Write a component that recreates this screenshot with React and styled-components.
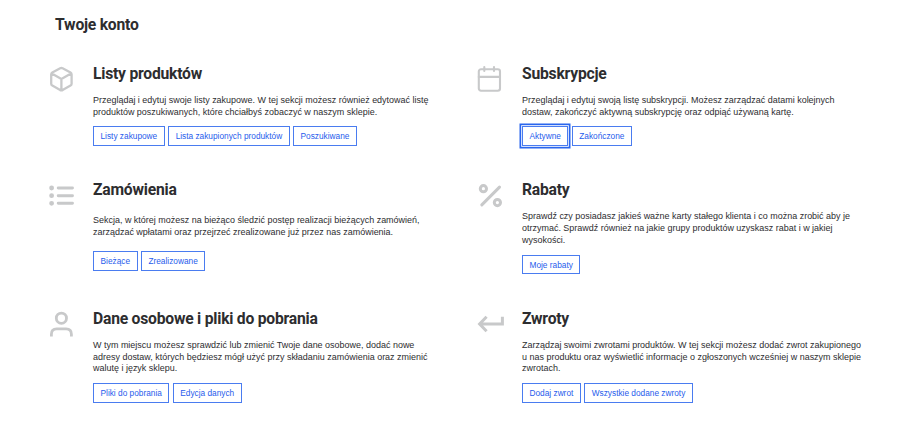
import React from 'react'
import styled, { createGlobalStyle } from 'styled-components'

const GlobalStyle = createGlobalStyle`
    * {
        box-sizing: border-box;
    }

    body {
        margin: 0;
        background: #fff;
        color: #2d2d2f;
        font-family: "Liberation Sans", Arial, sans-serif;
    }
`

const Page = styled.main`
    width: 908px;
    height: 424px;
    padding: 15px 0 0 48px;
    overflow: hidden;
`

const PageTitle = styled.h1`
    margin: 0 0 28.6px 7px;
    font-family: Roboto, sans-serif;
    font-size: 15.7px;
    font-weight: 700;
    letter-spacing: -0.24px;
    line-height: 20px;
`

const Sections = styled.div`
    display: grid;
    grid-template-columns: 429px 400px;
    grid-template-rows: 116.6px 128.5px 110px;
`

const Section = styled.section`
    display: flex;
    align-items: flex-start;
`

const Icon = styled.svg`
    flex: none;
    width: 28px;
    height: 28px;
    margin: 1.5px 17px 0 0;
    fill: none;
    stroke: #c8c9ca;
    stroke-width: ${props => props.$stroke || 2.3};
    stroke-linecap: round;
    stroke-linejoin: round;
`

const Content = styled.div`
    flex: 1;
    white-space: nowrap;
`

const Title = styled.h2`
    margin: 0;
    font-family: Roboto, sans-serif;
    font-size: 15.7px;
    font-weight: 700;
    letter-spacing: -0.23px;
    line-height: 20.4px;
`

const Description = styled.p`
    margin: ${props => (props.$spaced ? '14.8px 0 12.2px' : '10.9px 0 8.2px')};
    font-size: 8.97px;
    line-height: 11.7px;
`

const Buttons = styled.div`
    display: flex;
    gap: 3.4px;
`

const Button = styled.a`
    height: 19.6px;
    padding: 0 6.5px;
    border: 1px solid #4a7cf0;
    box-shadow: ${props => (props.$active ? '0 0 0 0.8px #fff, 0 0 0 2.5px #2a66ee' : 'none')};
    color: #1f5cec;
    font-size: 8.3px;
    line-height: 18px;
    text-decoration: none;
    cursor: pointer;
`

const BoxIcon = () => (
    <Icon viewBox="0 0 28 28">
        <path d="M12.2 3.3 4.3 7.5Q3.2 8.2 3.2 9.5v9.2q0 1.3 1.1 1.9l7.9 4.5q1.2.6 2.4 0l7.9-4.5q1.1-.6 1.1-1.9V9.5q0-1.3-1.1-2l-7.9-4.2q-1.2-.6-2.4 0zM3.8 8.4l9.6 5.5 9.6-5.5M13.4 13.9v11.3" />
    </Icon>
)

const CalendarIcon = () => (
    <Icon viewBox="0 0 28 28" $stroke={2.1}>
        <rect x="1.8" y="4.3" width="21.2" height="21.4" rx="2.2" />
        <path d="M1.8 11.9H23M7.3 2v4M17 2v4" />
    </Icon>
)

const ListIcon = () => (
    <Icon viewBox="0 0 28 28" $stroke={2.9}>
        <path d="M10.2 6h14.3M10.2 13.7h14.3M10.2 21.3h14.3" />
        <path d="M3.6 6h.01M3.6 13.7h.01M3.6 21.3h.01" strokeWidth="4.8" />
    </Icon>
)

const PercentIcon = () => (
    <Icon viewBox="0 0 28 28" $stroke={3}>
        <circle cx="6.4" cy="6.7" r="3.1" />
        <circle cx="20.4" cy="20.6" r="3.1" />
        <path d="M22.5 5.1 4.8 22.9" />
    </Icon>
)

const UserIcon = () => (
    <Icon viewBox="0 0 28 28" $stroke={2.8}>
        <circle cx="13.4" cy="8.2" r="5.1" />
        <path d="M3.4 26.5v-2.3q0-5.3 5.3-5.3h9.4q5.3 0 5.3 5.3v2.3" strokeLinecap="butt" />
    </Icon>
)

const ReturnIcon = () => (
    <Icon viewBox="0 0 28 28" $stroke={3}>
        <path d="M25.4 6.8V14H3M9.6 6.8 2.6 14l7 7.2" strokeLinecap="butt" strokeLinejoin="miter" />
    </Icon>
)

const sections = [
    {
        icon: BoxIcon,
        title: 'Listy produktów',
        lines: [
            'Przeglądaj i edytuj swoje listy zakupowe. W tej sekcji możesz również edytować listę',
            'produktów poszukiwanych, które chciałbyś zobaczyć w naszym sklepie.',
        ],
        buttons: ['Listy zakupowe', 'Lista zakupionych produktów', 'Poszukiwane'],
    },
    {
        icon: CalendarIcon,
        title: 'Subskrypcje',
        lines: [
            'Przeglądaj i edytuj swoją listę subskrypcji. Możesz zarządzać datami kolejnych',
            'dostaw, zakończyć aktywną subskrypcję oraz odpiąć używaną kartę.',
        ],
        buttons: ['Aktywne', 'Zakończone'],
        active: 'Aktywne',
    },
    {
        icon: ListIcon,
        title: 'Zamówienia',
        lines: [
            'Sekcja, w której możesz na bieżąco śledzić postęp realizacji bieżących zamówień,',
            'zarządzać wpłatami oraz przejrzeć zrealizowane już przez nas zamówienia.',
        ],
        buttons: ['Bieżące', 'Zrealizowane'],
        spaced: true,
    },
    {
        icon: PercentIcon,
        title: 'Rabaty',
        lines: [
            'Sprawdź czy posiadasz jakieś ważne karty stałego klienta i co można zrobić aby je',
            'otrzymać. Sprawdź również na jakie grupy produktów uzyskasz rabat i w jakiej',
            'wysokości.',
        ],
        buttons: ['Moje rabaty'],
    },
    {
        icon: UserIcon,
        title: 'Dane osobowe i pliki do pobrania',
        lines: [
            'W tym miejscu możesz sprawdzić lub zmienić Twoje dane osobowe, dodać nowe',
            'adresy dostaw, których będziesz mógł użyć przy składaniu zamówienia oraz zmienić',
            'walutę i język sklepu.',
        ],
        buttons: ['Pliki do pobrania', 'Edycja danych'],
    },
    {
        icon: ReturnIcon,
        title: 'Zwroty',
        lines: [
            'Zarządzaj swoimi zwrotami produktów. W tej sekcji możesz dodać zwrot zakupionego',
            'u nas produktu oraz wyświetlić informacje o zgłoszonych wcześniej w naszym sklepie',
            'zwrotach.',
        ],
        buttons: ['Dodaj zwrot', 'Wszystkie dodane zwroty'],
    },
]

const App = () => (
    <>
        <GlobalStyle />
        <Page>
            <PageTitle>Twoje konto</PageTitle>
            <Sections>
                {sections.map(({ icon: SectionIcon, title, lines, buttons, active, spaced }) => (
                    <Section key={title}>
                        <SectionIcon />
                        <Content>
                            <Title>{title}</Title>
                            <Description $spaced={spaced}>
                                {lines.map((line, i) => (
                                    <React.Fragment key={i}>
                                        {i > 0 && <br />}
                                        {line}
                                    </React.Fragment>
                                ))}
                            </Description>
                            <Buttons>
                                {buttons.map(label => (
                                    <Button key={label} $active={label === active}>{label}</Button>
                                ))}
                            </Buttons>
                        </Content>
                    </Section>
                ))}
            </Sections>
        </Page>
    </>
)

export default App
